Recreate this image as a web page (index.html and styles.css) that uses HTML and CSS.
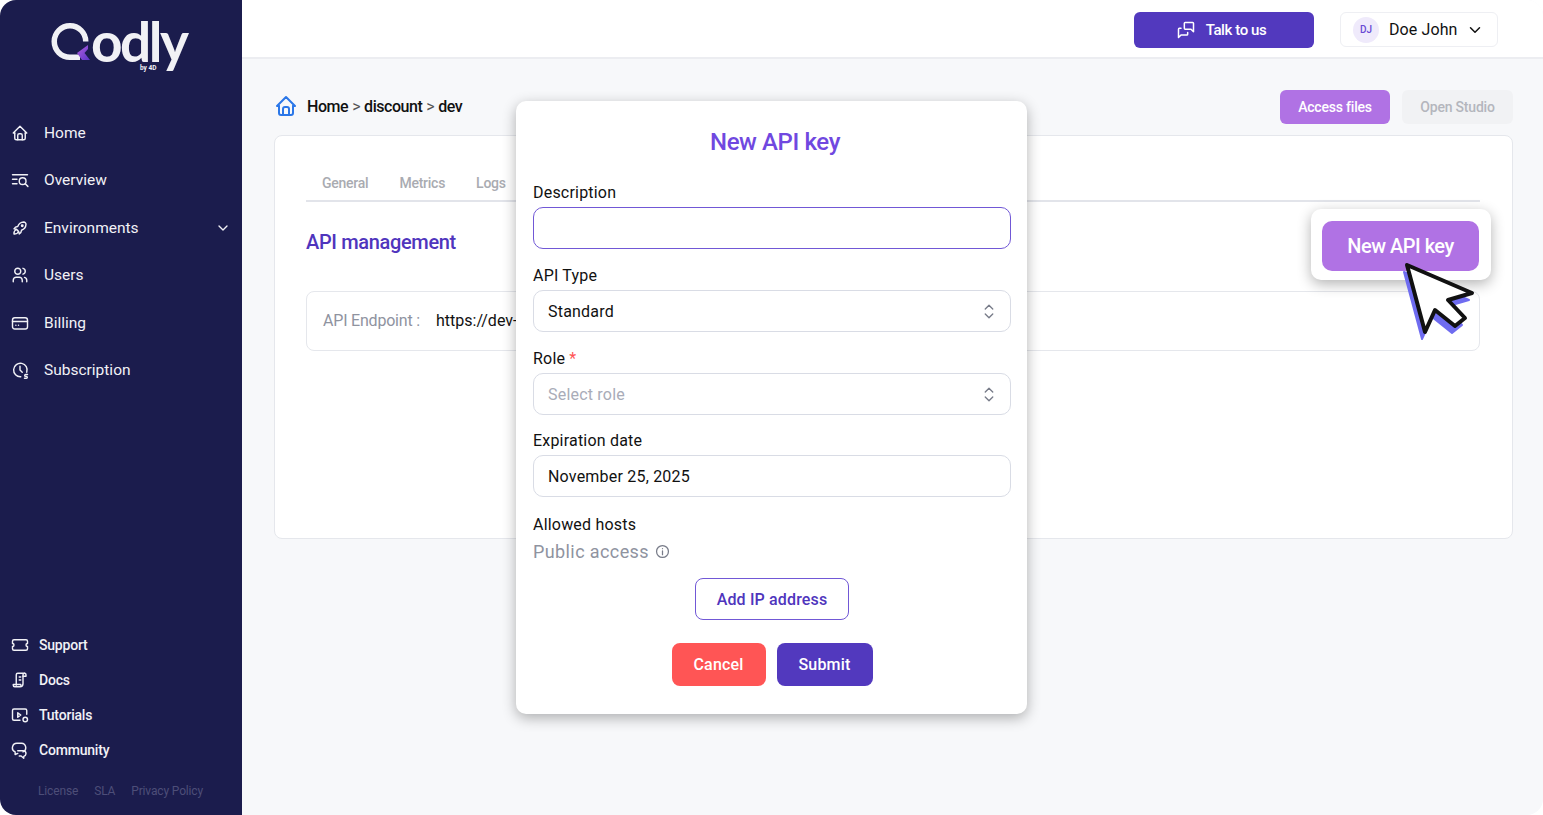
FILE: index.html
```html
<!DOCTYPE html>
<html lang="en">
<head>
    <meta charset="UTF-8">
    <title>Qodly - New API key</title>
    <link rel="stylesheet" href="styles.css">
</head>
<body>
    <div class="app">
        <aside class="sidebar">
            <div class="logo">
                <svg class="logo-q" viewBox="0 0 44 44" width="44" height="44">
                    <defs>
                        <linearGradient id="qgrad" x1="0" y1="0" x2="1" y2="1">
                            <stop offset="0" stop-color="#b45fe0"/>
                            <stop offset="1" stop-color="#5a35c8"/>
                        </linearGradient>
                    </defs>
                    <path d="M29 36.300H19A15.750 15.750 0 1 1 34.750 20.500" fill="none" stroke="#f1f1f5" stroke-width="5.500" stroke-linecap="butt"/>
                    <path d="M37 24L26 32L31 39H39L33.500 32L37 28Z" fill="url(#qgrad)" stroke="none"/>
                </svg>
                <span class="logo-word">odly</span>
                <span class="logo-by">by 4D</span>
            </div>
            <nav class="nav">
                <a class="nav-item">
                    <svg class="ico" viewBox="0 0 24 24"><path d="M5 12H3l9-9 9 9h-2"/><path d="M5 12v7a2 2 0 0 0 2 2h10a2 2 0 0 0 2-2v-7"/><path d="M9 21v-6a2 2 0 0 1 2-2h2a2 2 0 0 1 2 2v6"/></svg>
                    Home
                </a>
                <a class="nav-item">
                    <svg class="ico" viewBox="0 0 24 24"><path d="M2 5h20"/><path d="M2 11h6"/><path d="M2 17h6"/><circle cx="15.500" cy="13.500" r="4.500"/><path d="M19 17l3.500 3.500"/></svg>
                    Overview
                </a>
                <a class="nav-item">
                    <svg class="ico" viewBox="0 0 24 24"><path d="M4 13a8 8 0 0 1 7 7 6 6 0 0 0 3-5 9 9 0 0 0 6-8 3 3 0 0 0-3-3 9 9 0 0 0-8 6 6 6 0 0 0-5 3"/><path d="M7 14a6 6 0 0 0-3 6 6 6 0 0 0 6-3"/><circle cx="15" cy="9" r="1"/></svg>
                    Environments
                    <svg class="nav-caret" viewBox="0 0 24 24"><path d="M6 9l6 6 6-6"/></svg>
                </a>
                <a class="nav-item">
                    <svg class="ico" viewBox="0 0 24 24"><circle cx="9" cy="7" r="4"/><path d="M3 21v-2a4 4 0 0 1 4-4h4a4 4 0 0 1 4 4v2"/><path d="M16 3.130a4 4 0 0 1 0 7.750"/><path d="M21 21v-2a4 4 0 0 0-3-3.850"/></svg>
                    Users
                </a>
                <a class="nav-item">
                    <svg class="ico" viewBox="0 0 24 24"><rect x="2" y="5" width="20" height="15" rx="3"/><path d="M2 10h20"/><path d="M6.500 15h.01"/><path d="M10 15h.01"/></svg>
                    Billing
                </a>
                <a class="nav-item">
                    <svg class="ico" viewBox="0 0 24 24"><path d="M13 21a9 9 0 1 1 8-6"/><path d="M12 7v5l3 3"/><path d="M22 18h-2.500a1 1 0 0 0 0 2.500h1a1 1 0 0 1 0 2.500H18"/></svg>
                    Subscription
                </a>
            </nav>
            <div class="side-bottom">
                <a class="sub-item">
                    <svg class="ico" viewBox="0 0 24 24"><path d="M4 5h16a2 2 0 0 1 2 2v3a2 2 0 0 0 0 4v3a2 2 0 0 1-2 2H4a2 2 0 0 1-2-2v-3a2 2 0 0 0 0-4V7a2 2 0 0 1 2-2z"/></svg>
                    Support
                </a>
                <a class="sub-item">
                    <svg class="ico" viewBox="0 0 24 24"><path d="M7 19V5a2 2 0 0 1 2-2h9a2 2 0 0 0-2 2v12a4 4 0 0 1-4 4H5a2 2 0 0 1-2-2v-1h10v1"/><path d="M11 8h2"/><path d="M11 12h2"/><path d="M18 3a2 2 0 0 1 2 2v2h-4"/></svg>
                    Docs
                </a>
                <a class="sub-item">
                    <svg class="ico" viewBox="0 0 24 24"><path d="M12 19H4a2 2 0 0 1-2-2V6a2 2 0 0 1 2-2h15a2 2 0 0 1 2 2v5"/><path d="M9 9l4 3-4 3z"/><circle cx="19" cy="18" r="3"/></svg>
                    Tutorials
                </a>
                <a class="sub-item">
                    <svg class="ico" viewBox="0 0 24 24"><path d="M9 16.500L5.500 18v-3.500A6 6 0 0 1 8 3h6a6 6 0 0 1 2 11.500"/><path d="M9 13h7a4 4 0 0 1 4 4 4 4 0 0 1-3 3.500V23l-3.500-3H11"/></svg>
                    Community
                </a>
                <div class="side-links">
                    <span>License</span>
                    <span>SLA</span>
                    <span>Privacy Policy</span>
                </div>
            </div>
        </aside>

        <div class="main">
            <header class="topbar">
                <button class="btn-talk" type="button">
                    <svg class="talk-ico" viewBox="0 0 24 24"><path d="M21 14l-3-3h-7a1 1 0 0 1-1-1V4a1 1 0 0 1 1-1h9a1 1 0 0 1 1 1v10"/><path d="M14 15v2a1 1 0 0 1-1 1H6l-3 3V11a1 1 0 0 1 1-1h2"/></svg>
                    Talk to us
                </button>
                <div class="user">
                    <span class="avatar">DJ</span>
                    <span class="user-name">Doe John</span>
                    <svg class="user-caret" viewBox="0 0 24 24"><path d="M6 9l6 6 6-6"/></svg>
                </div>
            </header>

            <section class="content">
                <div class="crumb-row">
                    <div class="crumbs">
                        <svg class="crumb-home" viewBox="0 0 24 24"><path d="M5 12H3l9-9 9 9h-2"/><path d="M5 12v7a2 2 0 0 0 2 2h10a2 2 0 0 0 2-2v-7"/><path d="M9 21v-6a2 2 0 0 1 2-2h2a2 2 0 0 1 2 2v6"/></svg>
                        <b>Home</b><i>&gt;</i><b>discount</b><i>&gt;</i><b>dev</b>
                    </div>
                    <div class="crumb-actions">
                        <button class="btn-access" type="button">Access files</button>
                        <button class="btn-studio" type="button">Open Studio</button>
                    </div>
                </div>
                <div class="card">
                    <div class="tabs">
                        <span>General</span>
                        <span>Metrics</span>
                        <span>Logs</span>
                    </div>
                    <h2 class="card-title">API management</h2>
                    <div class="endpoint">
                        <span class="endpoint-label">API Endpoint :</span>
                        <span class="endpoint-url">https://dev-</span>
                    </div>
                </div>
            </section>
        </div>

        <div class="callout">
            <button class="btn-new" type="button">New API key</button>
        </div>
        <svg class="cursor" viewBox="0 0 85 90">
            <path d="M12 10L77 38L53 45L70 63L60 71L40 55L30 77Z" fill="#6f6cf0" stroke="#6f6cf0" stroke-width="2" transform="translate(-3 7)"/>
            <path d="M12 10L77 38L53 45L70 63L60 71L40 55L30 77Z" fill="#fff" stroke="#111" stroke-width="4"/>
        </svg>

        <div class="modal">
            <h1 class="modal-title">New API key</h1>
            <div class="field">
                <label>Description</label>
                <div class="box box-focus"></div>
            </div>
            <div class="field">
                <label>API Type</label>
                <div class="box">
                    Standard
                    <svg class="updown" viewBox="0 0 12 18"><path d="M1.500 6L6 1.500 10.500 6"/><path d="M1.500 12L6 16.500 10.500 12"/></svg>
                </div>
            </div>
            <div class="field field-short">
                <label>Role <em>*</em></label>
                <div class="box box-empty">
                    Select role
                    <svg class="updown" viewBox="0 0 12 18"><path d="M1.500 6L6 1.500 10.500 6"/><path d="M1.500 12L6 16.500 10.500 12"/></svg>
                </div>
            </div>
            <div class="field">
                <label>Expiration date</label>
                <div class="box">November 25, 2025</div>
            </div>
            <div class="hosts">
                <label>Allowed hosts</label>
                <div class="public">
                    Public access
                    <svg class="info" viewBox="0 0 24 24"><circle cx="12" cy="12" r="9.500"/><path d="M12 11v6"/><path d="M12 7.500h.01"/></svg>
                </div>
            </div>
            <div class="add-row">
                <button class="btn-add" type="button">Add IP address</button>
            </div>
            <div class="modal-actions">
                <button class="btn-cancel" type="button">Cancel</button>
                <button class="btn-submit" type="button">Submit</button>
            </div>
        </div>
    </div>
</body>
</html>
```

FILE: styles.css
```css
* {
    box-sizing: border-box;
}
html, body {
    margin: 0;
    height: 100%;
    background: #fff;
}
body {
    font-family: Roboto, "Liberation Sans", sans-serif;
    color: #111;
    overflow: hidden;
}
button {
    font-family: inherit;
    border: none;
    cursor: pointer;
}
svg {
    fill: none;
    stroke: currentColor;
    stroke-linecap: round;
    stroke-linejoin: round;
}
.app {
    position: relative;
    display: flex;
    width: 1543px;
    height: 815px;
    border-radius: 16px;
    overflow: hidden;
}

/* sidebar */
.sidebar {
    width: 242px;
    flex: none;
    display: flex;
    flex-direction: column;
    background: #1b1c4d;
    color: #f1f1f6;
}
.logo {
    position: relative;
    height: 109px;
    padding: 21px 0 0 51px;
    display: flex;
    align-items: flex-start;
}
.logo-q {
    flex: none;
}
.logo-word {
    font-family: Lato, sans-serif;
    font-weight: 700;
    font-size: 55px;
    line-height: 42px;
    letter-spacing: -2.500px;
    color: #f1f1f5;
    margin: -1px 0 0 -4px;
}
.logo-by {
    position: absolute;
    left: 140px;
    top: 64px;
    font-size: 6.500px;
    font-weight: 700;
    line-height: 8px;
}
.nav {
    display: flex;
    flex-direction: column;
}
.nav-item {
    display: flex;
    align-items: center;
    height: 47.500px;
    padding-left: 11px;
    font-size: 15.500px;
}
.ico {
    width: 18px;
    height: 18px;
    flex: none;
    stroke-width: 1.900;
    margin-right: 15px;
}
.nav-caret {
    width: 16px;
    height: 16px;
    stroke-width: 2;
    margin-left: auto;
    margin-right: 11px;
}
.side-bottom {
    margin-top: auto;
    display: flex;
    flex-direction: column;
    padding-bottom: 16px;
}
.sub-item {
    display: flex;
    align-items: center;
    height: 35px;
    padding-left: 11px;
    font-size: 14px;
    font-weight: 500;
    letter-spacing: -0.2px;
}
.sub-item .ico {
    margin-right: 10px;
}
.side-links {
    display: flex;
    gap: 16px;
    margin-top: 16px;
    padding-left: 38px;
    font-size: 12px;
    line-height: 16px;
    letter-spacing: -0.15px;
    color: #4d4e78;
}

/* main area */
.main {
    flex: 1;
    display: flex;
    flex-direction: column;
    background: #f7f8fa;
}
.topbar {
    height: 59px;
    flex: none;
    display: flex;
    align-items: flex-start;
    justify-content: flex-end;
    gap: 26px;
    padding: 12px 45px 0 0;
    background: #fff;
    border-bottom: 2px solid #ecedf1;
}
.btn-talk {
    width: 180px;
    height: 36px;
    display: flex;
    align-items: center;
    justify-content: center;
    gap: 10px;
    padding: 0 6px 0 0;
    background: #5239be;
    color: #fff;
    border-radius: 6px;
    font-size: 15px;
    font-weight: 500;
    letter-spacing: -0.4px;
}
.talk-ico {
    width: 20px;
    height: 20px;
    stroke-width: 1.800;
}
.user {
    width: 158px;
    height: 35px;
    display: flex;
    align-items: center;
    padding-left: 12px;
    border: 1px solid #eeeff3;
    border-radius: 6px;
}
.avatar {
    width: 26px;
    height: 26px;
    border-radius: 50%;
    background: #efeafb;
    color: #6a4bd4;
    font-size: 10px;
    font-weight: 500;
    display: flex;
    align-items: center;
    justify-content: center;
}
.user-name {
    margin-left: 10px;
    font-size: 16px;
    letter-spacing: 0.1px;
}
.user-caret {
    width: 18px;
    height: 18px;
    stroke-width: 2;
    margin-left: 9px;
}
.content {
    flex: 1;
    padding: 31px 30px 0 32px;
}
.crumb-row {
    height: 34px;
    display: flex;
    align-items: center;
    justify-content: space-between;
}
.crumbs {
    display: flex;
    align-items: center;
    padding-bottom: 2px;
    font-size: 16px;
    letter-spacing: -0.45px;
}
.crumbs b {
    font-weight: 500;
}
.crumbs i {
    font-style: normal;
    color: #555;
    margin: 0 4px;
}
.crumb-home {
    width: 24px;
    height: 24px;
    stroke-width: 2;
    color: #2b77e8;
    margin-right: 9px;
}
.crumb-actions {
    display: flex;
    gap: 12px;
}
.btn-access, .btn-studio {
    height: 34px;
    border-radius: 6px;
    font-size: 14px;
    font-weight: 500;
    letter-spacing: -0.2px;
}
.btn-access {
    width: 110px;
    background: #b072e4;
    color: #fff;
}
.btn-studio {
    width: 111px;
    background: #f1f2f4;
    color: #b4b6bd;
}
.card {
    margin-top: 11px;
    height: 404px;
    padding: 31px 32px 31px 31px;
    background: #fff;
    border: 1px solid #e5e7ec;
    border-radius: 8px;
}
.tabs {
    height: 35px;
    display: flex;
    align-items: center;
    gap: 31px;
    padding: 0 0 2px 16px;
    border-bottom: 2px solid #e2e4ea;
    font-size: 14px;
    font-weight: 500;
    letter-spacing: -0.25px;
    color: #a9abb1;
}
.card-title {
    margin: 27px 0 0;
    font-size: 20px;
    line-height: 26px;
    font-weight: 500;
    letter-spacing: -0.35px;
    color: #4f35bd;
}
.endpoint {
    margin-top: 36px;
    height: 60px;
    display: flex;
    align-items: center;
    padding: 0 0 2px 16px;
    border: 1px solid #e5e7ec;
    border-radius: 8px;
    font-size: 16px;
}
.endpoint-label {
    width: 113px;
    letter-spacing: -0.2px;
    color: #8f939f;
}

/* highlighted button and pointer on top of the page */
.callout {
    position: absolute;
    left: 1311px;
    top: 209px;
    width: 180px;
    height: 71px;
    padding: 12px 12px 0 11px;
    background: #fff;
    border-radius: 10px;
    box-shadow: 0 4px 14px rgba(0, 0, 0, 0.3);
}
.btn-new {
    width: 157px;
    height: 50px;
    background: #b072e4;
    color: #fff;
    border-radius: 10px;
    font-size: 20px;
    font-weight: 500;
    letter-spacing: -0.5px;
}
.cursor {
    position: absolute;
    left: 1395px;
    top: 255px;
    width: 85px;
    height: 90px;
}

/* modal */
.modal {
    position: absolute;
    left: 516px;
    top: 101px;
    width: 511px;
    height: 613px;
    padding: 0 16px 0 17px;
    background: #fff;
    border-radius: 10px;
    box-shadow: 0 4px 14px rgba(0, 0, 0, 0.3);
}
.modal-title {
    margin: 0;
    height: 79px;
    padding: 25px 0 0 6px;
    text-align: center;
    font-size: 24px;
    line-height: 32px;
    font-weight: 500;
    letter-spacing: -0.4px;
    color: #7048e0;
}
.field {
    height: 83px;
}
.field-short {
    height: 82px;
}
label {
    display: block;
    height: 27px;
    padding-top: 1px;
    font-size: 16px;
    line-height: 24px;
    letter-spacing: 0.2px;
}
label em {
    font-style: normal;
    color: #ff5555;
}
.box {
    height: 42px;
    display: flex;
    align-items: center;
    justify-content: space-between;
    padding: 0 16px 0 14px;
    border: 1px solid #d9dce5;
    border-radius: 10px;
    font-size: 16px;
    letter-spacing: 0.2px;
}
.box-focus {
    border-color: #7158d6;
}
.box-empty {
    color: #a9acb8;
}
.updown {
    width: 10px;
    height: 15px;
    stroke-width: 1.600;
    color: #777b88;
}
.hosts {
    margin-top: 1px;
    height: 66px;
}
.hosts label {
    height: 26px;
}
.public {
    display: flex;
    align-items: center;
    gap: 6px;
    height: 26px;
    font-size: 18px;
    letter-spacing: 0.4px;
    color: #8f939f;
}
.info {
    width: 15px;
    height: 15px;
    stroke-width: 2;
    color: #777b88;
}
.add-row {
    display: flex;
    justify-content: center;
}
.btn-add {
    width: 154px;
    height: 42px;
    background: #fff;
    border: 1px solid #7158d6;
    border-radius: 8px;
    color: #4f35bd;
    font-size: 16px;
    font-weight: 500;
    letter-spacing: 0.15px;
}
.modal-actions {
    display: flex;
    justify-content: center;
    gap: 11px;
    margin-top: 23px;
}
.modal-actions button {
    height: 43px;
    border-radius: 8px;
    color: #fff;
    font-size: 16px;
    font-weight: 500;
    letter-spacing: 0.2px;
}
.btn-cancel {
    width: 94px;
    background: #ff5555;
}
.btn-submit {
    width: 96px;
    background: #5239be;
}
```
